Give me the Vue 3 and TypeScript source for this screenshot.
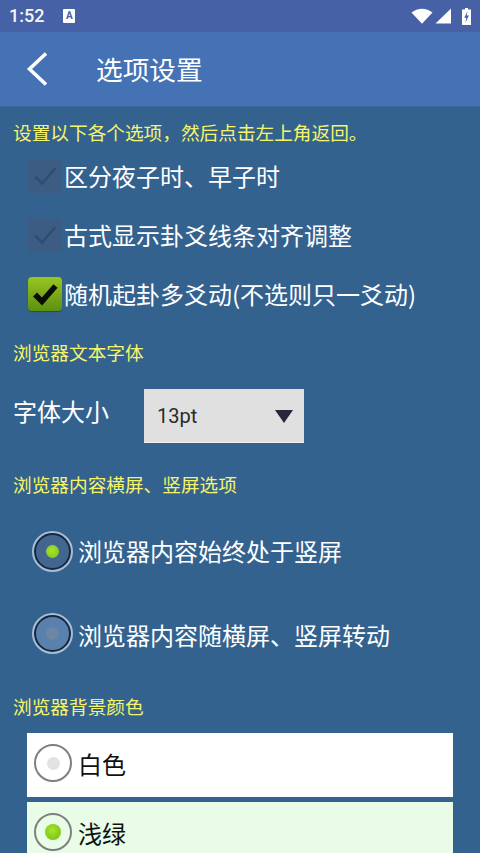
<script setup lang="ts">
const checks = [
  { label: '区分夜子时、早子时', on: false },
  { label: '古式显示卦爻线条对齐调整', on: false },
  { label: '随机起卦多爻动(不选则只一爻动)', on: true },
]
const orient = [
  { label: '浏览器内容始终处于竖屏', on: true },
  { label: '浏览器内容随横屏、竖屏转动', on: false },
]
const colours = [
  { label: '白色', on: false, cls: 'white' },
  { label: '浅绿', on: true, cls: 'green' },
]
</script>

<template>
  <div class="page">
    <div class="status">
      <span class="time">1:52</span>
      <span class="notif">A</span>
      <span class="spacer"></span>
      <svg class="wifi" width="22" height="16" viewBox="0 0 22 16"><path d="M0.5 4.500C6.500-0.600 15.500-0.600 21.500 4.500L11 15.800Z" fill="#fff"/></svg>
      <svg class="signal" width="16" height="16" viewBox="0 0 16 16"><path d="M16 0.500V15.500H0.500Z" fill="#fff"/></svg>
      <svg class="battery" width="9" height="17" viewBox="0 0 9 17"><path d="M3 0H6V1.500H9V17H0V1.500H3Z" fill="#fff"/><path d="M5.600 3.200L2.200 9.800H4.200L3.500 14.500L6.900 7.600H4.800Z" fill="#4661a5"/></svg>
    </div>
    <header class="bar">
      <svg class="back" width="24" height="36" viewBox="0 0 24 36"><path d="M21 2.500L4.500 18L21 33.500" fill="none" stroke="#fff" stroke-width="3.600"/></svg>
      <h1 class="title">选项设置</h1>
    </header>
    <main class="content">
      <p class="hint first">设置以下各个选项，然后点击左上角返回。</p>
      <div class="checks">
        <div v-for="c in checks" :key="c.label" class="check-row">
          <span class="box" :class="{ on: c.on }">
            <svg width="28" height="24" viewBox="0 0 28 24"><path d="M4 12.500L11 19.500L24.500 4" fill="none" :stroke="c.on ? '#0a0d06' : '#2f4d70'" :stroke-width="c.on ? 5.500 : 2.500"/></svg>
          </span>
          <span class="check-label">{{ c.label }}</span>
        </div>
      </div>
      <p class="hint font-head">浏览器文本字体</p>
      <div class="font-row">
        <span class="font-label">字体大小</span>
        <div class="select">
          <span>13pt</span>
          <span class="arrow"></span>
        </div>
      </div>
      <p class="hint orient-head">浏览器内容横屏、竖屏选项</p>
      <div class="orient">
        <div v-for="o in orient" :key="o.label" class="orient-row">
          <span class="radio" :class="{ on: o.on }"><i></i></span>
          <span class="orient-label">{{ o.label }}</span>
        </div>
      </div>
      <p class="hint bg-head">浏览器背景颜色</p>
      <div class="colours">
        <div v-for="c in colours" :key="c.label" class="colour" :class="c.cls">
          <span class="lradio" :class="{ on: c.on }"><i></i></span>
          <span class="colour-label">{{ c.label }}</span>
        </div>
      </div>
    </main>
  </div>
</template>

<style>
html, body { margin: 0; overflow: hidden; }
</style>

<style scoped>
.page {
  width: 480px;
  height: 853px;
  overflow: hidden;
  background: #34628f;
  font-family: "Noto Sans CJK SC", "Noto Sans", sans-serif;
  color: #fff;
}
.status {
  height: 32px;
  background: #4661a5;
  display: flex;
  align-items: center;
  padding: 0 9px 0 9px;
}
.time {
  font: 500 18px/32px Roboto, sans-serif;
  color: #f4f6fa;
}
.notif {
  margin-left: 19px;
  width: 12px;
  height: 14px;
  background: #fff;
  border-radius: 1px;
  color: #4661a5;
  font: 700 10px/13px Roboto, sans-serif;
  text-align: center;
}
.spacer { flex: 1; }
.wifi { margin-right: 2px; }
.signal { margin-right: 11px; }
.bar {
  height: 74px;
  background: #4472b4;
  display: flex;
  align-items: center;
  border-bottom: 1px solid #3d6699;
  box-sizing: content-box;
}
.back { margin-left: 25px; }
.title {
  margin: -1px 0 0 47px;
  font-size: 26.670px;
  font-weight: 400;
  line-height: 36px;
}
.content { display: flex; flex-direction: column; }
.hint {
  margin: 0;
  padding-left: 13px;
  font-size: 18.670px;
  line-height: 26px;
  color: #f6f56a;
}
.first { margin-top: 12px; }
.checks {
  display: flex;
  flex-direction: column;
  gap: 23px;
  margin-top: 13px;
  padding-left: 28px;
}
.check-row {
  height: 36px;
  display: flex;
  align-items: center;
}
.box {
  width: 34px;
  height: 34px;
  margin-top: -1px;
  border-radius: 4px;
  background: #3d5c84;
  display: flex;
  align-items: center;
  justify-content: center;
  flex: none;
}
.box.on {
  background: linear-gradient(180deg, #9ac521, #5c9010);
  box-shadow: 0 1px 1px #2c4f2a;
}
.check-label {
  margin-left: 2px;
  font-size: 24px;
  line-height: 36px;
  white-space: nowrap;
}
.font-head { margin-top: 27px; }
.font-row {
  display: flex;
  align-items: flex-start;
  margin-top: 24px;
  padding-left: 13px;
  height: 54px;
}
.font-label {
  width: 131px;
  font-size: 24px;
  line-height: 36px;
  margin-top: 4px;
}
.select {
  width: 160px;
  height: 54px;
  background: #e0e0e0;
  border-bottom: 1px solid #f0f0f0;
  color: #2a2a2a;
  display: flex;
  align-items: center;
  justify-content: space-between;
  padding: 0 11px 0 13px;
  box-sizing: border-box;
  font: 400 20px/24px Roboto, sans-serif;
}
.arrow {
  width: 0;
  height: 0;
  margin-top: 2px;
  border-left: 9px solid transparent;
  border-right: 9px solid transparent;
  border-top: 13px solid #26263c;
}
.orient-head { margin-top: 28px; }
.orient {
  display: flex;
  flex-direction: column;
  gap: 44px;
  margin-top: 34px;
  padding-left: 32px;
}
.orient-row {
  height: 40px;
  display: flex;
  align-items: center;
}
.radio {
  width: 33px;
  height: 33px;
  margin: 2px;
  border: 2px solid #16283f;
  outline: 2px solid #a9bdd2;
  border-radius: 50%;
  background: #426690;
  display: flex;
  align-items: center;
  justify-content: center;
  flex: none;
}
.radio:not(.on) {
  margin-top: -2px;
  background: #5a80ad;
}
.radio i {
  width: 13px;
  height: 13px;
  border-radius: 50%;
  background: #6c86a3;
}
.radio.on i { background: radial-gradient(circle at 45% 40%, #a8e52a, #7cc411); }
.orient-label {
  margin-left: 5px;
  font-size: 24px;
  line-height: 36px;
  white-space: nowrap;
}
.bg-head { margin-top: 38px; }
.colours {
  display: flex;
  flex-direction: column;
  gap: 5px;
  margin: 14px 27px 0 27px;
}
.colour {
  height: 64px;
  display: flex;
  align-items: center;
  padding-left: 7px;
  color: #111;
  flex: none;
}
.white { background: #fff; }
.green { background: #e8fce8; }
.lradio {
  width: 34px;
  height: 34px;
  margin-top: -4px;
  border: 2px solid #7f7f7f;
  border-radius: 50%;
  display: flex;
  align-items: center;
  justify-content: center;
  flex: none;
}
.lradio i {
  width: 13px;
  height: 13px;
  border-radius: 50%;
  background: #e2e2e2;
}
.lradio.on i {
  width: 16px;
  height: 16px;
  background: radial-gradient(circle at 45% 40%, #a8e52a, #6cbb12);
}
.colour-label {
  margin-left: 6px;
  margin-top: -2px;
  font-size: 24px;
  line-height: 36px;
}
</style>
